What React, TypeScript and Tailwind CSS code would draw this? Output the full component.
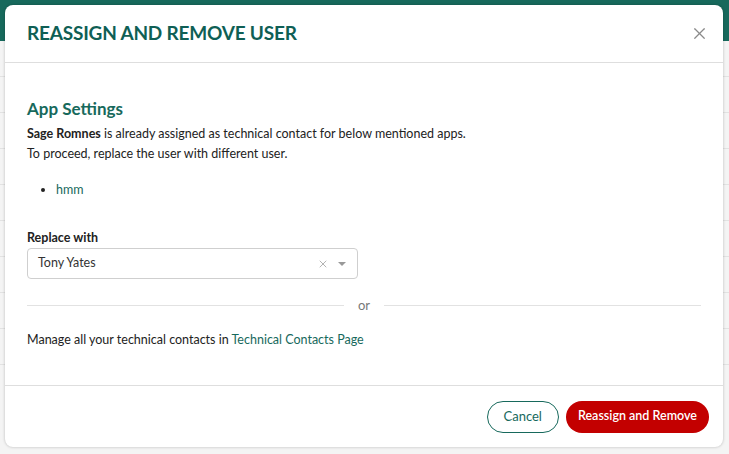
import { X } from 'lucide-react'

function Backdrop() {
  const rows = [0, 1, 2, 3, 4, 5, 6, 7, 8]
  return (
    <div className="absolute inset-0 flex flex-col bg-[#f4f4f4]">
      <div className="h-[41px] bg-[#17695c] px-14 pt-1 text-[11px] font-bold text-white/80">SUPPORT</div>
      <div className="flex-1 flex flex-col">
        {rows.map((r) => (
          <div key={r} className="h-[36px] border-b border-[#e2e2e2] flex">
            <div className="w-[33px] border-r border-[#e6e6e6]" />
            <div className="w-[130px] border-r border-[#e6e6e6]" />
            <div className="w-[98px] border-r border-[#e6e6e6]" />
            <div className="w-[65px] border-r border-[#e6e6e6]" />
            <div className="flex-1" />
          </div>
        ))}
      </div>
    </div>
  )
}

export default function App() {
  return (
    <div
      className="relative w-[729px] h-[454px] overflow-hidden"
      style={{ fontFamily: 'Lato, "Open Sans", sans-serif' }}
    >
      <Backdrop />
      <div className="absolute left-[5px] top-[5px] w-[718px] h-[442px] bg-white rounded-[8px] shadow-[0_0_3px_rgba(0,0,0,0.25)] flex flex-col">
        {/* Header */}
        <div className="h-[58px] flex items-center justify-between pl-[22px] pr-[14px] border-b border-[#dedede]">
          <h2 className="text-[19px] font-bold text-[#0f5f55] tracking-[-0.2px]">REASSIGN AND REMOVE USER</h2>
          <button className="text-[#8a8a8a]">
            <X className="w-[19px] h-[19px]" strokeWidth={1.5} />
          </button>
        </div>

        {/* Body */}
        <div className="flex-1 px-[22px] pt-[35px]">
          <h3 className="text-[17px] font-bold text-[#17695c] leading-[22px]">App Settings</h3>
          <p className="mt-[4px] text-[12.5px] leading-[20px] text-[#222]">
            <span className="font-bold">Sage Romnes</span> is already assigned as technical contact for below mentioned apps.
            <br />
            To proceed, replace the user with different user.
          </p>
          <ul className="mt-[16px] list-disc pl-[29px] text-[12.5px] leading-[20px]">
            <li className="text-[#17695c] marker:text-[#222]">hmm</li>
          </ul>

          <label className="block mt-[29px] text-[12.5px] font-bold text-[#222] leading-[18px]">Replace with</label>
          <div className="mt-[1px] w-[331px] h-[31px] border border-[#cfcfcf] rounded-[4px] flex items-center pl-[10px] pr-[11px] text-[12.5px] text-[#333]">
            <span className="flex-1">Tony Yates</span>
            <X className="w-[12px] h-[12px] text-[#999]" strokeWidth={1.5} />
            <span className="ml-[9px] w-0 h-0 border-l-[4px] border-r-[4px] border-t-[4px] border-l-transparent border-r-transparent border-t-[#999]" />
          </div>

          <div className="mt-[19px] flex items-center gap-[12px]">
            <div className="flex-1 h-px bg-[#e2e2e2]" />
            <span className="text-[13px] text-[#777] leading-[14px] px-[2px]">or</span>
            <div className="flex-1 h-px bg-[#e2e2e2]" />
          </div>

          <p className="mt-[18px] text-[12.5px] text-[#222] leading-[20px]">
            Manage all your technical contacts in <span className="text-[#17695c]">Technical Contacts Page</span>
          </p>
        </div>

        {/* Footer */}
        <div className="h-[62px] border-t border-[#dedede] flex items-center justify-end gap-[7px] pr-[14px]">
          <button className="h-[32px] px-[16px] rounded-full border border-[#17695c] text-[#17695c] text-[13px]">
            Cancel
          </button>
          <button className="h-[32px] px-[12px] rounded-full bg-[#c30000] text-white text-[12.5px] font-semibold">
            Reassign and Remove
          </button>
        </div>
      </div>
    </div>
  )
}
